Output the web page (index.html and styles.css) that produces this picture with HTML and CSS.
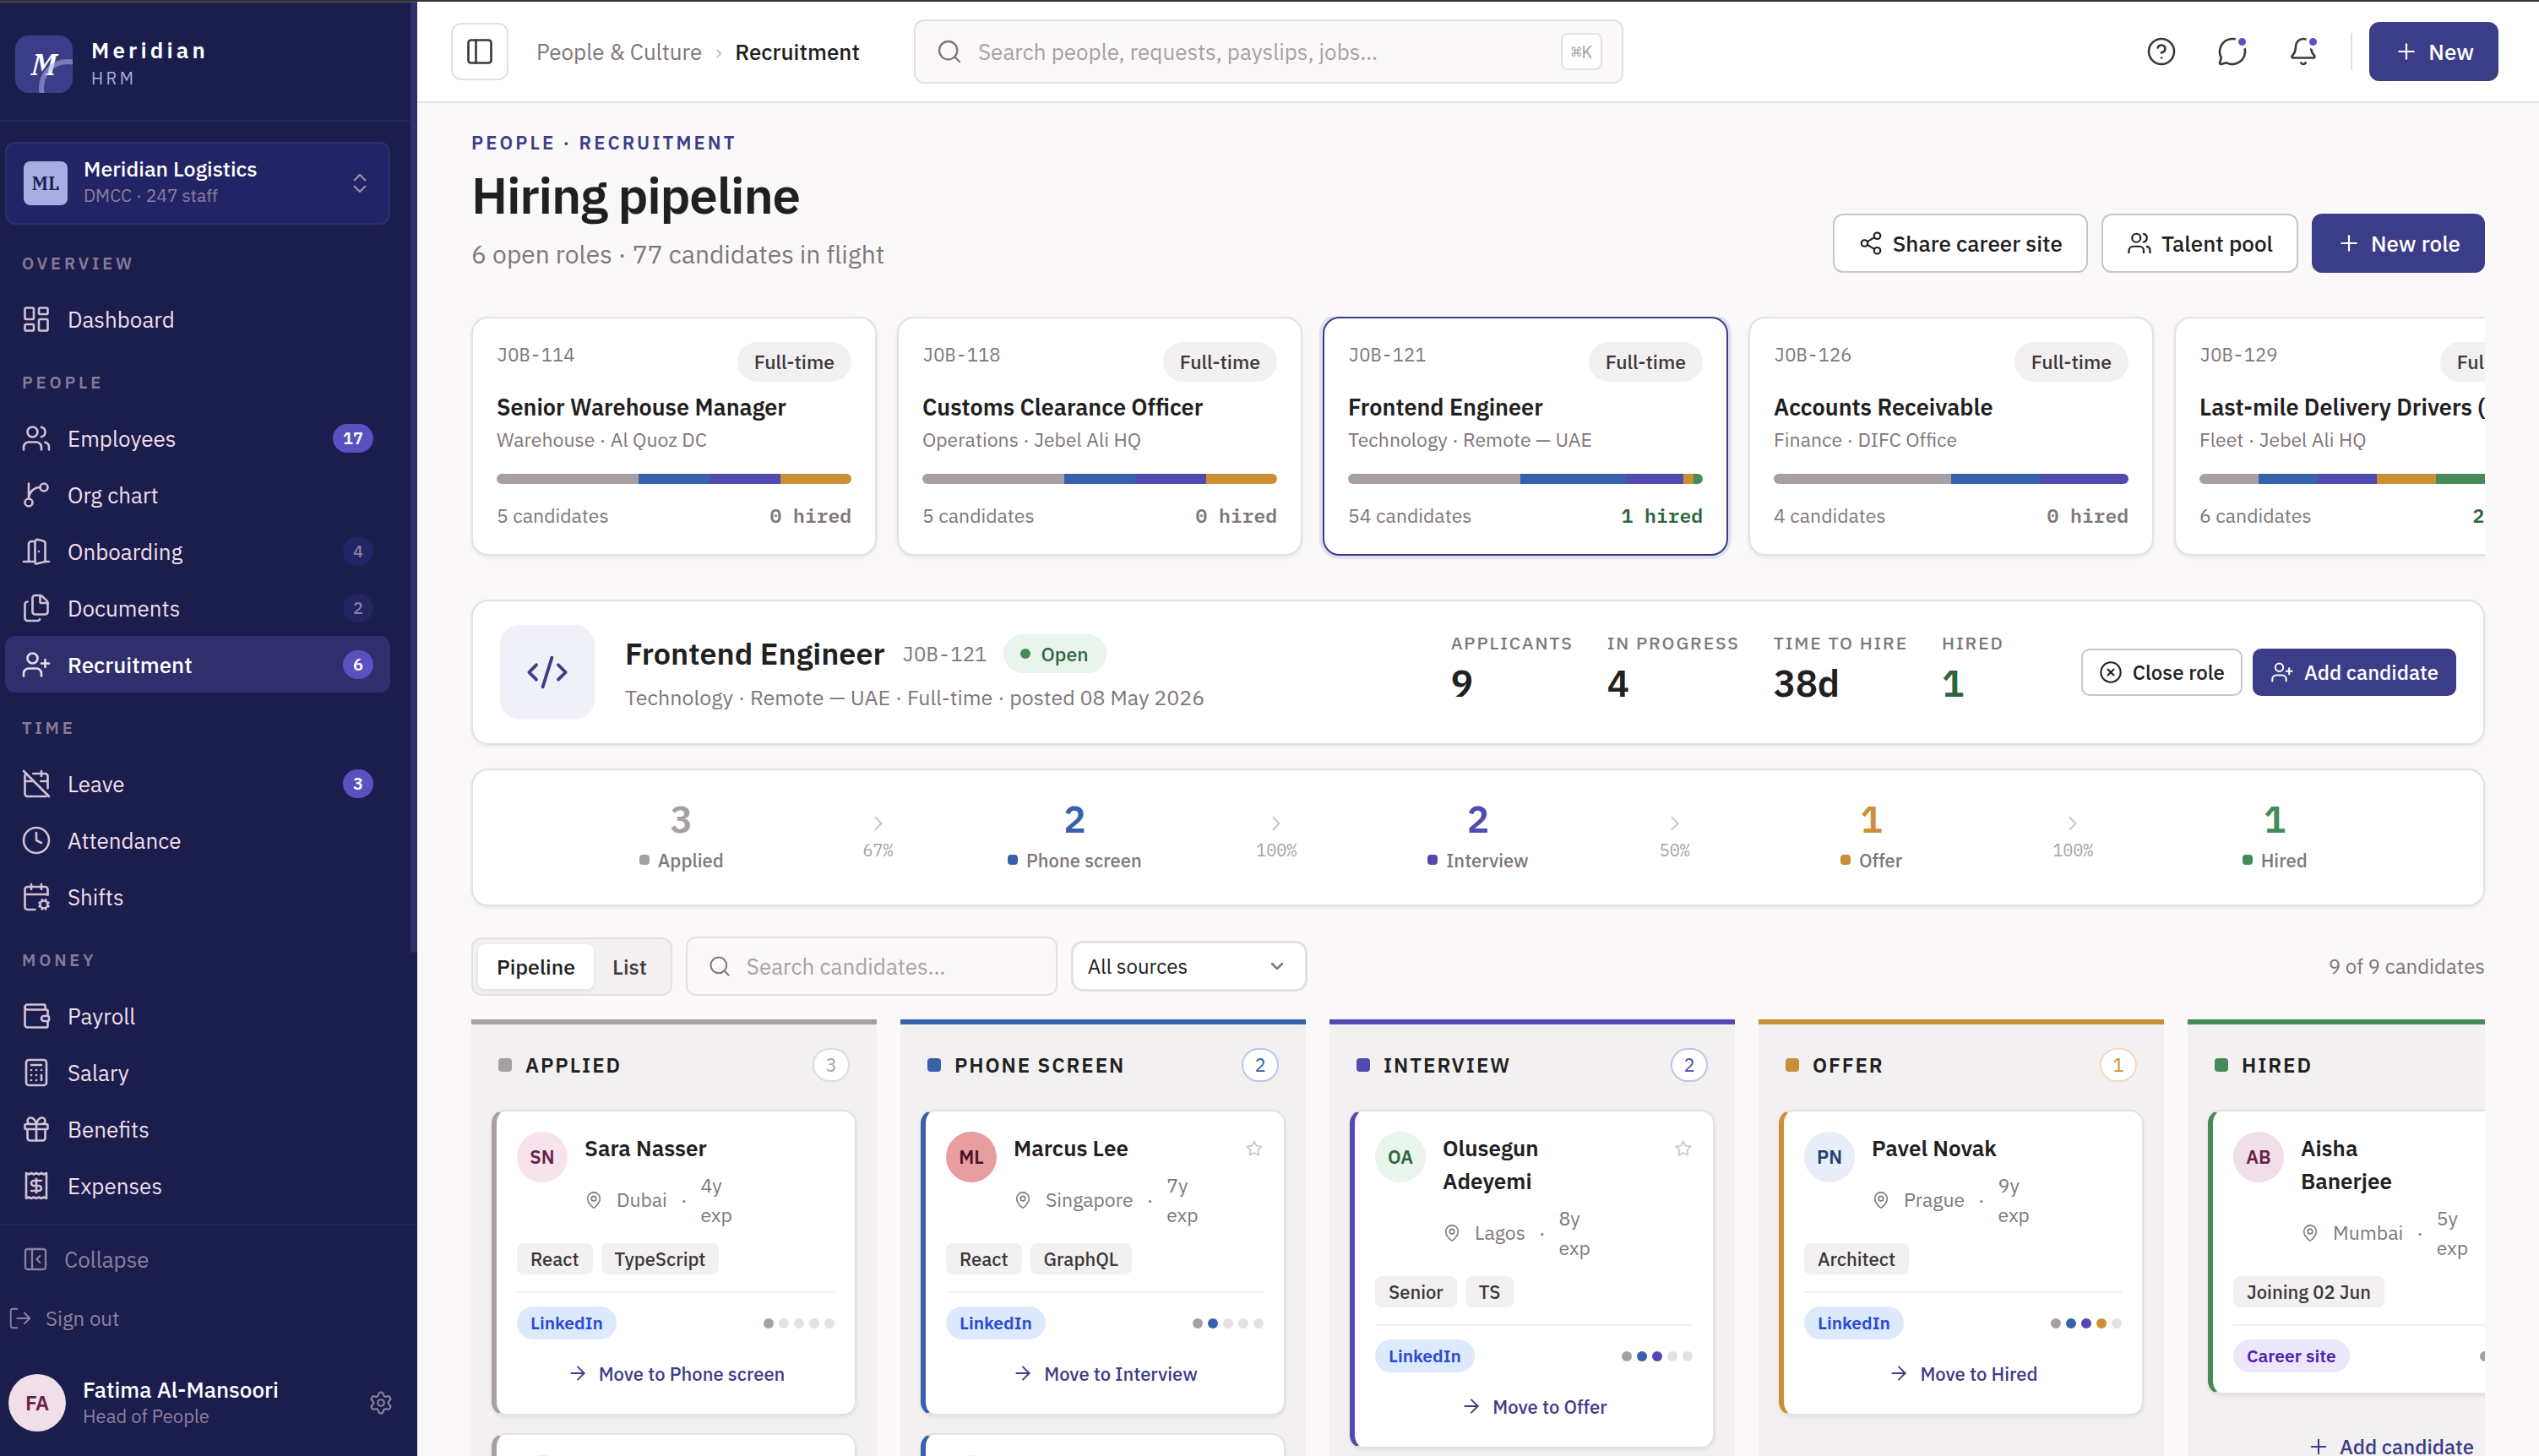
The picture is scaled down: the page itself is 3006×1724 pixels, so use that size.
FILE: index.html
```
<!DOCTYPE html>
<html lang="en">
<head>
    <meta charset="UTF-8">
    <meta name="viewport" content="width=device-width, initial-scale=1.0">
    <title>Meridian HRM - Recruitment</title>
    <link rel="stylesheet" href="styles.css">
</head>
<body>
    <!-- Icon sprite -->
    <svg class="sprite" aria-hidden="true">
        <symbol id="i-dashboard" viewBox="0 0 24 24"><rect x="3" y="3" width="7" height="9" rx="1"/><rect x="14" y="3" width="7" height="5" rx="1"/><rect x="14" y="12" width="7" height="9" rx="1"/><rect x="3" y="16" width="7" height="5" rx="1"/></symbol>
        <symbol id="i-users" viewBox="0 0 24 24"><path d="M16 21v-2a4 4 0 0 0-4-4H6a4 4 0 0 0-4 4v2"/><path d="M16 3.128a4 4 0 0 1 0 7.744"/><path d="M22 21v-2a4 4 0 0 0-3-3.87"/><circle cx="9" cy="7" r="4"/></symbol>
        <symbol id="i-branch" viewBox="0 0 24 24"><path d="M15 6a9 9 0 0 0-9 9V3"/><circle cx="18" cy="6" r="3"/><circle cx="6" cy="18" r="3"/></symbol>
        <symbol id="i-door" viewBox="0 0 24 24"><path d="M11 20H2"/><path d="M11 4.562v16.157a1 1 0 0 0 1.242.97L19 20V5.562a2 2 0 0 0-1.515-1.94l-4-1A2 2 0 0 0 11 4.561z"/><path d="M11 4H8a2 2 0 0 0-2 2v14"/><path d="M14 12h.01"/><path d="M22 20h-3"/></symbol>
        <symbol id="i-files" viewBox="0 0 24 24"><path d="M15 2h-4a2 2 0 0 0-2 2v11a2 2 0 0 0 2 2h8a2 2 0 0 0 2-2V8"/><path d="M16.706 2.706A2.4 2.4 0 0 0 15 2v5a1 1 0 0 0 1 1h5a2.4 2.4 0 0 0-.706-1.706z"/><path d="M5 7a2 2 0 0 0-2 2v11a2 2 0 0 0 2 2h8a2 2 0 0 0 1.732-1"/></symbol>
        <symbol id="i-user-plus" viewBox="0 0 24 24"><path d="M16 21v-2a4 4 0 0 0-4-4H6a4 4 0 0 0-4 4v2"/><circle cx="9" cy="7" r="4"/><path d="M19 8v6"/><path d="M22 11h-6"/></symbol>
        <symbol id="i-cal-off" viewBox="0 0 24 24"><path d="M4.2 4.2A2 2 0 0 0 3 6v14a2 2 0 0 0 2 2h14a2 2 0 0 0 1.82-1.18"/><path d="M21 15.5V6a2 2 0 0 0-2-2H9.5"/><path d="M16 2v4"/><path d="M3 10h7"/><path d="M21 10h-5.5"/><path d="m2 2 20 20"/></symbol>
        <symbol id="i-clock" viewBox="0 0 24 24"><circle cx="12" cy="12" r="10"/><path d="M12 6v6l4 2"/></symbol>
        <symbol id="i-cal-cog" viewBox="0 0 24 24"><path d="m15.2 16.9-.9-.4"/><path d="m15.2 19.1-.9.4"/><path d="M16 2v4"/><path d="m16.9 15.2-.4-.9"/><path d="m16.9 20.8-.4.9"/><path d="m19.5 14.3-.4.9"/><path d="m19.5 21.7-.4-.9"/><path d="M21 10.5V6a2 2 0 0 0-2-2H5a2 2 0 0 0-2 2v14a2 2 0 0 0 2 2h6"/><path d="m21.7 16.5-.9.4"/><path d="m21.7 19.5-.9-.4"/><path d="M3 10h18"/><path d="M8 2v4"/><circle cx="18" cy="18" r="3"/></symbol>
        <symbol id="i-wallet" viewBox="0 0 24 24"><path d="M19 7V4a1 1 0 0 0-1-1H5a2 2 0 0 0 0 4h15a1 1 0 0 1 1 1v4h-3a2 2 0 0 0 0 4h3a1 1 0 0 0 1-1v-2a1 1 0 0 0-1-1"/><path d="M3 5v14a2 2 0 0 0 2 2h15a1 1 0 0 0 1-1v-4"/></symbol>
        <symbol id="i-calc" viewBox="0 0 24 24"><rect x="4" y="2" width="16" height="20" rx="2"/><path d="M8 6h8"/><path d="M16 14v4"/><path d="M16 10h.01"/><path d="M12 10h.01"/><path d="M8 10h.01"/><path d="M12 14h.01"/><path d="M8 14h.01"/><path d="M12 18h.01"/><path d="M8 18h.01"/></symbol>
        <symbol id="i-gift" viewBox="0 0 24 24"><rect x="3" y="8" width="18" height="4" rx="1"/><path d="M12 8v13"/><path d="M19 12v7a2 2 0 0 1-2 2H7a2 2 0 0 1-2-2v-7"/><path d="M7.5 8a2.5 2.5 0 0 1 0-5A4.8 8 0 0 1 12 8a4.8 8 0 0 1 4.5-5 2.5 2.5 0 0 1 0 5"/></symbol>
        <symbol id="i-receipt" viewBox="0 0 24 24"><path d="M4 2v20l2-1 2 1 2-1 2 1 2-1 2 1 2-1 2 1V2l-2 1-2-1-2 1-2-1-2 1-2-1-2 1Z"/><path d="M16 8h-6a2 2 0 1 0 0 4h4a2 2 0 1 1 0 4H8"/><path d="M12 17.5v-11"/></symbol>
        <symbol id="i-panel-close" viewBox="0 0 24 24"><rect x="3" y="3" width="18" height="18" rx="2"/><path d="M9 3v18"/><path d="m16 15-3-3 3-3"/></symbol>
        <symbol id="i-panel" viewBox="0 0 24 24"><rect x="3" y="3" width="18" height="18" rx="2"/><path d="M9 3v18"/></symbol>
        <symbol id="i-logout" viewBox="0 0 24 24"><path d="m16 17 5-5-5-5"/><path d="M21 12H9"/><path d="M9 21H5a2 2 0 0 1-2-2V5a2 2 0 0 1 2-2h4"/></symbol>
        <symbol id="i-settings" viewBox="0 0 24 24"><path d="M9.671 4.136a2.34 2.34 0 0 1 4.659 0 2.34 2.34 0 0 0 3.319 1.915 2.34 2.34 0 0 1 2.33 4.033 2.34 2.34 0 0 0 0 3.831 2.34 2.34 0 0 1-2.33 4.033 2.34 2.34 0 0 0-3.319 1.915 2.34 2.34 0 0 1-4.659 0 2.34 2.34 0 0 0-3.32-1.915 2.34 2.34 0 0 1-2.33-4.033 2.34 2.34 0 0 0 0-3.831A2.34 2.34 0 0 1 6.35 6.051a2.34 2.34 0 0 0 3.319-1.915"/><circle cx="12" cy="12" r="3"/></symbol>
        <symbol id="i-updown" viewBox="0 0 24 24"><path d="m7 15 5 5 5-5"/><path d="m7 9 5-5 5 5"/></symbol>
        <symbol id="i-search" viewBox="0 0 24 24"><circle cx="11" cy="11" r="8"/><path d="m21 21-4.34-4.34"/></symbol>
        <symbol id="i-help" viewBox="0 0 24 24"><circle cx="12" cy="12" r="10"/><path d="M9.09 9a3 3 0 0 1 5.83 1c0 2-3 3-3 3"/><path d="M12 17h.01"/></symbol>
        <symbol id="i-chat" viewBox="0 0 24 24"><path d="M2.992 16.342a2 2 0 0 1 .094 1.167l-1.065 3.29a1 1 0 0 0 1.236 1.168l3.413-.998a2 2 0 0 1 1.099.092 10 10 0 1 0-4.777-4.719"/></symbol>
        <symbol id="i-bell" viewBox="0 0 24 24"><path d="M10.268 21a2 2 0 0 0 3.464 0"/><path d="M3.262 15.326A1 1 0 0 0 4 17h16a1 1 0 0 0 .74-1.673C19.41 13.956 18 12.499 18 8A6 6 0 0 0 6 8c0 4.499-1.411 5.956-2.738 7.326"/></symbol>
        <symbol id="i-plus" viewBox="0 0 24 24"><path d="M5 12h14"/><path d="M12 5v14"/></symbol>
        <symbol id="i-share" viewBox="0 0 24 24"><circle cx="18" cy="5" r="3"/><circle cx="6" cy="12" r="3"/><circle cx="18" cy="19" r="3"/><path d="m8.59 13.51 6.83 3.98"/><path d="m15.41 6.51-6.82 3.98"/></symbol>
        <symbol id="i-code" viewBox="0 0 24 24"><path d="m18 16 4-4-4-4"/><path d="m6 8-4 4 4 4"/><path d="m14.5 4-5 16"/></symbol>
        <symbol id="i-x-circle" viewBox="0 0 24 24"><circle cx="12" cy="12" r="10"/><path d="m15 9-6 6"/><path d="m9 9 6 6"/></symbol>
        <symbol id="i-right" viewBox="0 0 24 24"><path d="m9 18 6-6-6-6"/></symbol>
        <symbol id="i-down" viewBox="0 0 24 24"><path d="m6 9 6 6 6-6"/></symbol>
        <symbol id="i-pin" viewBox="0 0 24 24"><path d="M20 10c0 4.993-5.539 10.193-7.399 11.799a1 1 0 0 1-1.202 0C9.539 20.193 4 14.993 4 10a8 8 0 0 1 16 0"/><circle cx="12" cy="10" r="3"/></symbol>
        <symbol id="i-star" viewBox="0 0 24 24"><path d="M12 2.5l2.95 5.98 6.55.96-4.75 4.62 1.12 6.54L12 17.5l-5.87 3.1 1.12-6.54L2.5 9.44l6.55-.96z"/></symbol>
        <symbol id="i-arrow" viewBox="0 0 24 24"><path d="M5 12h14"/><path d="m12 5 7 7-7 7"/></symbol>
    </svg>

    <div class="app">
        <aside class="sidebar">
            <div class="nav-scroll">
                <div class="brand">
                    <div class="brand-logo">M</div>
                    <div>
                        <div class="brand-name">Meridian</div>
                        <div class="brand-sub">HRM</div>
                    </div>
                </div>

                <div class="workspace">
                    <div class="workspace-logo">ML</div>
                    <div class="workspace-text">
                        <div class="workspace-name">Meridian Logistics</div>
                        <div class="workspace-sub">DMCC · 247 staff</div>
                    </div>
                    <svg class="icon s30"><use href="#i-updown"/></svg>
                </div>

                <nav class="nav">
                    <div class="nav-label">OVERVIEW</div>
                    <a class="nav-item"><svg class="icon s36"><use href="#i-dashboard"/></svg><span>Dashboard</span></a>

                    <div class="nav-label">PEOPLE</div>
                    <a class="nav-item"><svg class="icon s36"><use href="#i-users"/></svg><span>Employees</span><b class="count hot">17</b></a>
                    <a class="nav-item"><svg class="icon s36"><use href="#i-branch"/></svg><span>Org chart</span></a>
                    <a class="nav-item"><svg class="icon s36"><use href="#i-door"/></svg><span>Onboarding</span><b class="count">4</b></a>
                    <a class="nav-item"><svg class="icon s36"><use href="#i-files"/></svg><span>Documents</span><b class="count">2</b></a>
                    <a class="nav-item active"><svg class="icon s36"><use href="#i-user-plus"/></svg><span>Recruitment</span><b class="count hot">6</b></a>

                    <div class="nav-label">TIME</div>
                    <a class="nav-item"><svg class="icon s36"><use href="#i-cal-off"/></svg><span>Leave</span><b class="count hot">3</b></a>
                    <a class="nav-item"><svg class="icon s36"><use href="#i-clock"/></svg><span>Attendance</span></a>
                    <a class="nav-item"><svg class="icon s36"><use href="#i-cal-cog"/></svg><span>Shifts</span></a>

                    <div class="nav-label">MONEY</div>
                    <a class="nav-item"><svg class="icon s36"><use href="#i-wallet"/></svg><span>Payroll</span></a>
                    <a class="nav-item"><svg class="icon s36"><use href="#i-calc"/></svg><span>Salary</span></a>
                    <a class="nav-item"><svg class="icon s36"><use href="#i-gift"/></svg><span>Benefits</span></a>
                    <a class="nav-item"><svg class="icon s36"><use href="#i-receipt"/></svg><span>Expenses</span></a>
                </nav>
                <div class="scroll-thumb"></div>
            </div>

            <div class="side-foot">
                <a class="foot-link collapse"><svg class="icon s32"><use href="#i-panel-close"/></svg><span>Collapse</span></a>
                <a class="foot-link signout"><svg class="icon s30"><use href="#i-logout"/></svg><span>Sign out</span></a>
                <div class="user">
                    <div class="user-avatar">FA</div>
                    <div class="user-text">
                        <div class="user-name">Fatima Al-Mansoori</div>
                        <div class="user-role">Head of People</div>
                    </div>
                    <svg class="icon s30"><use href="#i-settings"/></svg>
                </div>
            </div>
        </aside>

        <div class="main">
            <header class="topbar">
                <button class="panel-btn"><svg class="icon s36"><use href="#i-panel"/></svg></button>
                <div class="crumbs"><span>People &amp; Culture</span><i>›</i><strong>Recruitment</strong></div>
                <div class="search">
                    <svg class="icon s32"><use href="#i-search"/></svg>
                    <span>Search people, requests, payslips, jobs…</span>
                    <kbd>⌘K</kbd>
                </div>
                <div class="top-actions">
                    <button class="icon-btn"><svg class="icon s36"><use href="#i-help"/></svg></button>
                    <button class="icon-btn"><svg class="icon s36"><use href="#i-chat"/></svg><em class="ping"></em></button>
                    <button class="icon-btn"><svg class="icon s36"><use href="#i-bell"/></svg><em class="ping"></em></button>
                    <div class="divider"></div>
                    <button class="btn primary new-btn"><svg class="icon s30"><use href="#i-plus"/></svg>New</button>
                </div>
            </header>

            <main class="page">
                <div class="page-head">
                    <div>
                        <div class="eyebrow">PEOPLE · RECRUITMENT</div>
                        <h1>Hiring pipeline</h1>
                        <p class="page-sub">6 open roles · 77 candidates in flight</p>
                    </div>
                    <div class="head-actions">
                        <button class="btn"><svg class="icon s30"><use href="#i-share"/></svg>Share career site</button>
                        <button class="btn"><svg class="icon s30"><use href="#i-users"/></svg>Talent pool</button>
                        <button class="btn primary"><svg class="icon s30"><use href="#i-plus"/></svg>New role</button>
                    </div>
                </div>

                <!-- Open roles -->
                <div class="jobs">
                    <div class="job">
                        <div class="job-top"><code>JOB-114</code><span class="pill">Full-time</span></div>
                        <h3>Senior Warehouse Manager</h3>
                        <p>Warehouse · Al Quoz DC</p>
                        <div class="bar"><i class="applied" style="width:40%"></i><i class="phone" style="width:20%"></i><i class="interview" style="width:20%"></i><i class="offer" style="width:20%"></i></div>
                        <div class="job-foot"><span>5 candidates</span><b>0 hired</b></div>
                    </div>
                    <div class="job">
                        <div class="job-top"><code>JOB-118</code><span class="pill">Full-time</span></div>
                        <h3>Customs Clearance Officer</h3>
                        <p>Operations · Jebel Ali HQ</p>
                        <div class="bar"><i class="applied" style="width:40%"></i><i class="phone" style="width:20%"></i><i class="interview" style="width:20%"></i><i class="offer" style="width:20%"></i></div>
                        <div class="job-foot"><span>5 candidates</span><b>0 hired</b></div>
                    </div>
                    <div class="job selected">
                        <div class="job-top"><code>JOB-121</code><span class="pill">Full-time</span></div>
                        <h3>Frontend Engineer</h3>
                        <p>Technology · Remote — UAE</p>
                        <div class="bar"><i class="applied" style="width:48.6%"></i><i class="phone" style="width:29.8%"></i><i class="interview" style="width:16.1%"></i><i class="offer" style="width:2.8%"></i><i class="hired" style="width:2.7%"></i></div>
                        <div class="job-foot"><span>54 candidates</span><b class="green">1 hired</b></div>
                    </div>
                    <div class="job">
                        <div class="job-top"><code>JOB-126</code><span class="pill">Full-time</span></div>
                        <h3>Accounts Receivable</h3>
                        <p>Finance · DIFC Office</p>
                        <div class="bar"><i class="applied" style="width:50%"></i><i class="phone" style="width:25%"></i><i class="interview" style="width:25%"></i></div>
                        <div class="job-foot"><span>4 candidates</span><b>0 hired</b></div>
                    </div>
                    <div class="job">
                        <div class="job-top"><code>JOB-129</code><span class="pill">Full-time</span></div>
                        <h3>Last-mile Delivery Drivers (x4)</h3>
                        <p>Fleet · Jebel Ali HQ</p>
                        <div class="bar"><i class="applied" style="width:16.67%"></i><i class="phone" style="width:16.67%"></i><i class="interview" style="width:16.67%"></i><i class="offer" style="width:16.67%"></i><i class="hired" style="width:33.32%"></i></div>
                        <div class="job-foot"><span>6 candidates</span><b class="green">2 hired</b></div>
                    </div>
                </div>

                <!-- Selected role -->
                <section class="role">
                    <div class="role-icon"><svg class="icon s52"><use href="#i-code"/></svg></div>
                    <div class="role-info">
                        <div class="role-title"><h2>Frontend Engineer</h2><code>JOB-121</code><span class="status"><i></i>Open</span></div>
                        <p>Technology · Remote — UAE · Full-time · posted 08 May 2026</p>
                    </div>
                    <div class="stats">
                        <div><span>APPLICANTS</span><b>9</b></div>
                        <div><span>IN PROGRESS</span><b>4</b></div>
                        <div><span>TIME TO HIRE</span><b>38d</b></div>
                        <div><span>HIRED</span><b class="green">1</b></div>
                    </div>
                    <div class="role-actions">
                        <button class="btn small"><svg class="icon s28"><use href="#i-x-circle"/></svg>Close role</button>
                        <button class="btn small primary"><svg class="icon s28"><use href="#i-user-plus"/></svg>Add candidate</button>
                    </div>
                </section>

                <section class="funnel">
                    <div class="stage c-applied"><b>3</b><span><i></i>Applied</span></div>
                    <div class="step"><svg class="icon s28"><use href="#i-right"/></svg><code>67%</code></div>
                    <div class="stage c-phone"><b>2</b><span><i></i>Phone screen</span></div>
                    <div class="step"><svg class="icon s28"><use href="#i-right"/></svg><code>100%</code></div>
                    <div class="stage c-interview"><b>2</b><span><i></i>Interview</span></div>
                    <div class="step"><svg class="icon s28"><use href="#i-right"/></svg><code>50%</code></div>
                    <div class="stage c-offer"><b>1</b><span><i></i>Offer</span></div>
                    <div class="step"><svg class="icon s28"><use href="#i-right"/></svg><code>100%</code></div>
                    <div class="stage c-hired"><b>1</b><span><i></i>Hired</span></div>
                </section>

                <div class="toolbar">
                    <div class="segmented"><span class="on">Pipeline</span><span>List</span></div>
                    <div class="find"><svg class="icon s28"><use href="#i-search"/></svg>Search candidates…</div>
                    <div class="select">All sources<svg class="icon s24"><use href="#i-down"/></svg></div>
                    <div class="total">9 of 9 candidates</div>
                </div>

                <!-- Kanban board -->
                <div class="board">
                    <div class="col c-applied">
                        <div class="col-head"><i></i><h4>APPLIED</h4><span>3</span></div>
                        <article class="card">
                            <div class="person">
                                <div class="avatar pink">SN</div>
                                <div>
                                    <div class="name">Sara Nasser</div>
                                    <div class="meta"><svg class="icon s22"><use href="#i-pin"/></svg><span>Dubai</span><span>·</span><span>4y<br>exp</span></div>
                                </div>
                            </div>
                            <div class="tags"><span>React</span><span>TypeScript</span></div>
                            <div class="card-foot"><span class="source">LinkedIn</span><div class="dots"><i class="applied"></i><i></i><i></i><i></i><i></i></div></div>
                            <div class="move"><svg class="icon s26"><use href="#i-arrow"/></svg>Move to Phone screen</div>
                        </article>
                        <article class="card">
                            <div class="person"><div class="avatar pink"></div></div>
                        </article>
                    </div>

                    <div class="col c-phone">
                        <div class="col-head"><i></i><h4>PHONE SCREEN</h4><span>2</span></div>
                        <article class="card">
                            <div class="person">
                                <div class="avatar red">ML</div>
                                <div>
                                    <div class="name">Marcus Lee</div>
                                    <div class="meta"><svg class="icon s22"><use href="#i-pin"/></svg><span>Singapore</span><span>·</span><span>7y<br>exp</span></div>
                                </div>
                                <svg class="icon s22 star"><use href="#i-star"/></svg>
                            </div>
                            <div class="tags"><span>React</span><span>GraphQL</span></div>
                            <div class="card-foot"><span class="source">LinkedIn</span><div class="dots"><i class="applied"></i><i class="phone"></i><i></i><i></i><i></i></div></div>
                            <div class="move"><svg class="icon s26"><use href="#i-arrow"/></svg>Move to Interview</div>
                        </article>
                        <article class="card">
                            <div class="person"><div class="avatar sand"></div></div>
                        </article>
                    </div>

                    <div class="col c-interview">
                        <div class="col-head"><i></i><h4>INTERVIEW</h4><span>2</span></div>
                        <article class="card">
                            <div class="person">
                                <div class="avatar mint">OA</div>
                                <div>
                                    <div class="name">Olusegun<br>Adeyemi</div>
                                    <div class="meta"><svg class="icon s22"><use href="#i-pin"/></svg><span>Lagos</span><span>·</span><span>8y<br>exp</span></div>
                                </div>
                                <svg class="icon s22 star"><use href="#i-star"/></svg>
                            </div>
                            <div class="tags"><span>Senior</span><span>TS</span></div>
                            <div class="card-foot"><span class="source">LinkedIn</span><div class="dots"><i class="applied"></i><i class="phone"></i><i class="interview"></i><i></i><i></i></div></div>
                            <div class="move"><svg class="icon s26"><use href="#i-arrow"/></svg>Move to Offer</div>
                        </article>
                    </div>

                    <div class="col c-offer">
                        <div class="col-head"><i></i><h4>OFFER</h4><span>1</span></div>
                        <article class="card">
                            <div class="person">
                                <div class="avatar blue">PN</div>
                                <div>
                                    <div class="name">Pavel Novak</div>
                                    <div class="meta"><svg class="icon s22"><use href="#i-pin"/></svg><span>Prague</span><span>·</span><span>9y<br>exp</span></div>
                                </div>
                            </div>
                            <div class="tags"><span>Architect</span></div>
                            <div class="card-foot"><span class="source">LinkedIn</span><div class="dots"><i class="applied"></i><i class="phone"></i><i class="interview"></i><i class="offer"></i><i></i></div></div>
                            <div class="move"><svg class="icon s26"><use href="#i-arrow"/></svg>Move to Hired</div>
                        </article>
                    </div>

                    <div class="col c-hired">
                        <div class="col-head"><i></i><h4>HIRED</h4><span>1</span></div>
                        <article class="card">
                            <div class="person">
                                <div class="avatar rose">AB</div>
                                <div>
                                    <div class="name">Aisha<br>Banerjee</div>
                                    <div class="meta"><svg class="icon s22"><use href="#i-pin"/></svg><span>Mumbai</span><span>·</span><span>5y<br>exp</span></div>
                                </div>
                            </div>
                            <div class="tags"><span>Joining 02 Jun</span></div>
                            <div class="card-foot"><span class="source career">Career site</span><div class="dots"><i class="applied"></i><i class="phone"></i><i class="interview"></i><i class="offer"></i><i class="hired"></i></div></div>
                        </article>
                        <div class="add"><svg class="icon s28"><use href="#i-plus"/></svg>Add candidate</div>
                    </div>
                </div>
            </main>
        </div>
    </div>
</body>
</html>
```
FILE: styles.css
```
:root {
    --navy: #1b1d4d;
    --navy-2: #232465;
    --navy-3: #302e6c;
    --indigo: #3c3d88;
    --violet: #5a50bf;
    --ink: #212020;
    --ink-2: #3d3839;
    --muted: #80767a;
    --faint: #a89fa4;
    --line: #e4e0e3;
    --soft: #f2f0f1;
    --bg: #faf8f9;
    --applied: #a89fa4;
    --phone: #3762ab;
    --interview: #534ab1;
    --offer: #cb8f37;
    --hired: #448b58;
    --sans: "IBM Plex Sans", "Open Sans", "Noto Sans", sans-serif;
    --mono: "IBM Plex Mono", "Liberation Mono", monospace;
    --serif: "IBM Plex Serif", "Noto Serif", "Liberation Serif", serif;
}

* {
    margin: 0;
    padding: 0;
    box-sizing: border-box;
}

body {
    font-family: var(--sans);
    font-size: 26px;
    color: var(--ink);
    background: var(--bg);
    overflow: hidden;
}

button {
    font: inherit;
    color: inherit;
    background: none;
    border: none;
}

code {
    font-family: var(--mono);
}

/* Icons */
.sprite {
    position: absolute;
    width: 0;
    height: 0;
}

.icon {
    flex: none;
    fill: none;
    stroke: currentColor;
    stroke-width: 1.75;
    stroke-linecap: round;
    stroke-linejoin: round;
}

.s22 { width: 22px; height: 22px; }
.s24 { width: 24px; height: 24px; }
.s26 { width: 26px; height: 26px; }
.s28 { width: 28px; height: 28px; }
.s30 { width: 30px; height: 30px; }
.s32 { width: 32px; height: 32px; }
.s36 { width: 36px; height: 36px; }
.s52 { width: 52px; height: 52px; }

/* Stage colours */
.c-applied { --c: var(--applied); --ring: #e0dcde; }
.c-phone { --c: var(--phone); --ring: #b9cae6; }
.c-interview { --c: var(--interview); --ring: #c6c1e8; }
.c-offer { --c: var(--offer); --ring: #f0dcbc; }
.c-hired { --c: var(--hired); --ring: #bcdcc5; }

.applied { background: var(--applied); }
.phone { background: var(--phone); }
.interview { background: var(--interview); }
.offer { background: var(--offer); }
.hired { background: var(--hired); }

.green {
    color: #2c653d !important;
}

.app {
    display: flex;
    height: 1724px;
    border-top: 2px solid #333032;
}

/* Sidebar */
.sidebar {
    width: 494px;
    flex: none;
    display: flex;
    flex-direction: column;
    background: var(--navy);
    color: #fff;
    border-top: 1px solid #55547a;
}

.nav-scroll {
    position: relative;
    height: 1446px;
    padding-right: 8px;
    overflow: hidden;
}

.scroll-thumb {
    position: absolute;
    top: 0;
    right: 0;
    width: 8px;
    height: 1125px;
    border-radius: 4px;
    background: var(--navy-3);
}

.brand {
    display: flex;
    gap: 22px;
    height: 141px;
    padding: 39px 18px 0;
    border-bottom: 2px solid var(--navy-2);
}

.brand-logo {
    position: relative;
    width: 68px;
    height: 68px;
    border-radius: 16px;
    overflow: hidden;
    background: var(--indigo);
    font: italic 600 36px/68px var(--serif);
    text-align: center;
}

.brand-logo::after {
    content: "";
    position: absolute;
    left: 28px;
    top: 28px;
    width: 56px;
    height: 56px;
    border: 6px solid #a9aee2;
    border-radius: 50%;
    opacity: 0.55;
}

.brand-name {
    font-weight: 600;
    line-height: 34px;
    letter-spacing: 0.16em;
}

.brand-sub {
    margin-top: 2px;
    font-size: 20px;
    line-height: 30px;
    letter-spacing: 0.17em;
    color: #a9aee2;
}

.workspace {
    display: flex;
    align-items: center;
    width: 456px;
    height: 98px;
    margin: 24px 0 0 6px;
    padding: 0 19px 0 20px;
    border: 2px solid var(--navy-3);
    border-radius: 12px;
    background: var(--navy-2);
}

.workspace-logo {
    width: 52px;
    height: 52px;
    margin-right: 19px;
    border-radius: 8px;
    background: #a9aee2;
    color: var(--navy);
    font: 600 22px/52px var(--serif);
    text-align: center;
}

.workspace-text {
    flex: 1;
    padding-bottom: 5px;
}

.workspace-name {
    font-size: 25px;
    font-weight: 500;
    line-height: 34px;
}

.workspace-sub {
    font-size: 21px;
    line-height: 29px;
    color: #8b80a0;
}

.workspace .icon {
    color: #9c92ad;
}

.nav {
    width: 456px;
    margin: 4px 0 0 6px;
}

.nav-label {
    height: 74px;
    padding: 27px 0 0 20px;
    font-size: 20px;
    font-weight: 600;
    line-height: 30px;
    letter-spacing: 0.19em;
    color: #857a99;
}

.nav-item {
    display: flex;
    align-items: center;
    gap: 19px;
    height: 67px;
    padding: 0 20px 0 19px;
    border-radius: 12px;
    color: #f0dfea;
}

.nav-item .icon {
    opacity: 0.85;
}

.nav-item.active {
    background: var(--navy-3);
    color: #fff;
    font-weight: 500;
}

.count {
    min-width: 36px;
    height: 34px;
    margin-left: auto;
    padding: 0 12px;
    border-radius: 17px;
    background: var(--navy-2);
    color: #8b80a0;
    font-size: 20px;
    font-weight: 500;
    line-height: 34px;
    text-align: center;
}

.count.hot {
    background: var(--violet);
    color: #fff;
    font-weight: 600;
}

.side-foot {
    flex: 1;
    border-top: 2px solid var(--navy-2);
    color: #8b80a0;
}

.foot-link {
    display: flex;
    align-items: center;
}

.collapse {
    gap: 18px;
    height: 67px;
    margin: 6px 0 0 26px;
}

.signout {
    gap: 15px;
    height: 60px;
    margin: 7px 0 0 9px;
    font-size: 24px;
}

.signout .icon {
    stroke-width: 1.5;
}

.user {
    display: flex;
    align-items: center;
    margin-top: 36px;
    padding: 0 28px 0 10px;
}

.user-avatar {
    width: 68px;
    height: 68px;
    margin-right: 20px;
    border-radius: 50%;
    background: #f0dfe8;
    color: #6a1f47;
    font-size: 24px;
    font-weight: 600;
    line-height: 68px;
    text-align: center;
}

.user-text {
    flex: 1;
    padding-bottom: 4px;
}

.user-name {
    font-weight: 500;
    line-height: 34px;
    color: #fff;
}

.user-role {
    font-size: 22px;
    line-height: 29px;
}

/* Top bar */
.main {
    flex: 1;
    min-width: 0;
    display: flex;
    flex-direction: column;
}

.topbar {
    display: flex;
    align-items: center;
    height: 120px;
    flex: none;
    padding: 0 48px 0 40px;
    background: #fff;
    border-bottom: 2px solid var(--line);
}

.panel-btn {
    width: 68px;
    height: 68px;
    display: grid;
    place-items: center;
    border: 2px solid var(--line);
    border-radius: 12px;
    color: var(--ink-2);
}

.crumbs {
    display: flex;
    width: 447px;
    margin-left: 33px;
    color: var(--muted);
}

.crumbs i {
    width: 39px;
    color: #c9c3c6;
    font-style: normal;
    text-align: center;
}

.crumbs strong {
    color: var(--ink);
    font-weight: 500;
}

.search {
    display: flex;
    align-items: center;
    width: 840px;
    height: 76px;
    padding: 0 23px 0 24px;
    border: 2px solid var(--line);
    border-radius: 12px;
    background: var(--bg);
    color: var(--faint);
}

.search .icon {
    margin-right: 18px;
    color: var(--muted);
}

.search kbd {
    width: 49px;
    height: 44px;
    margin-left: auto;
    border: 2px solid var(--line);
    border-radius: 8px;
    background: #fff;
    font: 21px/40px var(--mono);
    text-align: center;
}

.top-actions {
    display: flex;
    align-items: center;
    gap: 16px;
    margin-left: auto;
}

.icon-btn {
    position: relative;
    width: 68px;
    height: 68px;
    display: grid;
    place-items: center;
    color: var(--ink-2);
}

.ping {
    position: absolute;
    top: 14px;
    right: 14px;
    width: 17px;
    height: 17px;
    border: 4px solid #fff;
    border-radius: 50%;
    background: var(--violet);
}

.divider {
    width: 2px;
    height: 44px;
    margin: 0 4px 0 6px;
    background: var(--line);
}

.btn {
    display: flex;
    align-items: center;
    gap: 11px;
    height: 70px;
    padding: 0 28px;
    border: 2px solid #cbc5c8;
    border-radius: 12px;
    background: #fff;
    font-weight: 500;
}

.btn.primary {
    padding: 0 27px;
    border-color: var(--indigo);
    background: var(--indigo);
    color: #fff;
}

.btn.small {
    gap: 12px;
    height: 56px;
    padding: 0 19px;
    border-radius: 10px;
    font-size: 24px;
}

/* Page */
.page {
    flex: 1;
    min-height: 0;
    padding: 30px 64px 0;
    overflow: hidden;
}

.page-head {
    display: flex;
    align-items: flex-end;
    justify-content: space-between;
    height: 171px;
}

.eyebrow {
    font-size: 22px;
    font-weight: 600;
    line-height: 33px;
    letter-spacing: 0.14em;
    color: var(--indigo);
}

h1 {
    margin-top: 13px;
    font-size: 60px;
    font-weight: 600;
    line-height: 66px;
    letter-spacing: -0.02em;
}

.page-sub {
    margin-top: 14px;
    font-size: 30px;
    line-height: 45px;
    color: var(--muted);
}

.head-actions,
.role-actions {
    display: flex;
    gap: 16px;
}

.role-actions {
    gap: 12px;
}

/* Job cards */
.jobs {
    display: flex;
    gap: 24px;
    margin: 52px -4px 0;
    padding: 0 4px 12px;
    overflow: hidden;
    clip-path: inset(0 4px 0 0);
}

.job {
    flex: 0 0 480px;
    height: 283px;
    padding: 28px;
    border: 2px solid var(--line);
    border-radius: 20px;
    background: #fff;
    box-shadow: 0 2px 4px rgba(40, 30, 35, 0.08);
}

.job.selected {
    border-color: var(--indigo);
    box-shadow: 0 0 0 4px #dfe0f1;
}

.job-top,
.job-foot {
    display: flex;
    justify-content: space-between;
}

.job-top code {
    font-size: 22px;
    line-height: 30px;
    color: var(--muted);
}

.pill {
    height: 47px;
    padding: 0 20px;
    border-radius: 24px;
    background: var(--soft);
    color: var(--ink-2);
    font-size: 23px;
    font-weight: 500;
    line-height: 47px;
}

.job h3 {
    margin-top: 12px;
    font-size: 27px;
    font-weight: 600;
    line-height: 35px;
    white-space: nowrap;
}

.job p {
    margin-top: 4px;
    font-size: 23px;
    line-height: 34px;
    color: var(--muted);
}

.bar {
    display: flex;
    height: 12px;
    margin-top: 24px;
    border-radius: 6px;
    overflow: hidden;
}

.job-foot {
    margin-top: 20px;
    font-size: 23px;
    line-height: 35px;
    color: var(--muted);
}

.job-foot b {
    font-family: var(--mono);
    font-weight: 600;
}

/* Selected role */
.role,
.funnel {
    display: flex;
    align-items: center;
    border: 2px solid var(--line);
    border-radius: 20px;
    background: #fff;
    box-shadow: 0 2px 4px rgba(40, 30, 35, 0.08);
}

.role {
    height: 172px;
    margin-top: 40px;
    padding: 0 32px;
}

.role-icon {
    width: 112px;
    height: 112px;
    display: grid;
    place-items: center;
    border-radius: 24px;
    background: #f0f0f9;
    color: var(--indigo);
}

.role-info {
    margin-left: 36px;
    padding-top: 4px;
}

.role-title {
    display: flex;
    align-items: center;
    gap: 20px;
}

.role-title h2 {
    font-size: 36px;
    font-weight: 600;
    line-height: 46px;
}

.role-title code {
    font-size: 24px;
    color: var(--muted);
}

.status {
    display: flex;
    align-items: center;
    gap: 12px;
    height: 46px;
    padding: 0 21px 0 20px;
    border-radius: 23px;
    background: #e9f4ed;
    color: #2c653d;
    font-size: 23px;
    font-weight: 500;
}

.status i {
    width: 12px;
    height: 12px;
    border-radius: 50%;
    background: var(--hired);
}

.role-info p {
    margin-top: 9px;
    font-size: 25px;
    line-height: 39px;
    color: var(--muted);
}

.stats {
    display: flex;
    gap: 40px;
    margin: 0 91px 0 auto;
    padding-bottom: 13px;
}

.stats span {
    display: block;
    font-size: 21px;
    font-weight: 500;
    line-height: 30px;
    letter-spacing: 0.09em;
    color: var(--muted);
}

.stats b {
    display: block;
    margin-top: 9px;
    font-size: 44px;
    font-weight: 600;
    line-height: 48px;
    letter-spacing: -0.01em;
}

/* Funnel */
.funnel {
    height: 163px;
    margin-top: 28px;
    padding: 0 32px;
}

.stage {
    flex: 1;
    text-align: center;
}

.stage b {
    display: block;
    font-size: 44px;
    font-weight: 600;
    line-height: 44px;
    color: var(--c);
}

.stage span {
    display: flex;
    align-items: center;
    justify-content: center;
    gap: 10px;
    margin-top: 10px;
    margin-bottom: 1px;
    font-size: 22px;
    font-weight: 500;
    line-height: 33px;
    color: var(--muted);
}

.stage i,
.col-head i {
    width: 12px;
    height: 12px;
    border-radius: 4px;
    background: var(--c);
}

.step {
    display: flex;
    flex-direction: column;
    align-items: center;
    gap: 5px;
    padding-bottom: 2px;
    color: #cbc5c8;
}

.step code {
    font-size: 20px;
    line-height: 26px;
    color: var(--faint);
}

/* Toolbar */
.toolbar {
    display: flex;
    align-items: center;
    height: 70px;
    margin-top: 36px;
}

.segmented {
    display: flex;
    height: 69px;
    padding: 6px;
    border: 2px solid var(--line);
    border-radius: 12px;
    background: var(--soft);
}

.segmented span {
    padding: 0 22px;
    border-radius: 8px;
    color: var(--ink-2);
    font-size: 25px;
    font-weight: 500;
    line-height: 53px;
}

.segmented .on {
    background: #fff;
    color: var(--ink);
    box-shadow: 0 2px 4px rgba(40, 30, 35, 0.08);
}

.find {
    display: flex;
    align-items: center;
    gap: 18px;
    width: 440px;
    height: 70px;
    margin-left: 16px;
    padding-left: 24px;
    border: 2px solid var(--line);
    border-radius: 12px;
    color: var(--faint);
}

.find .icon {
    color: var(--muted);
}

.select {
    display: flex;
    align-items: center;
    justify-content: space-between;
    width: 280px;
    height: 60px;
    margin-left: 16px;
    padding: 0 21px 0 17px;
    border: 3px solid var(--line);
    border-radius: 14px;
    background: #fff;
    font-size: 24px;
}

.select .icon {
    stroke-width: 2.5;
    color: var(--muted);
}

.total {
    margin-left: auto;
    font-size: 24px;
    color: var(--muted);
}

/* Board */
.board {
    display: flex;
    gap: 28px;
    height: 517px;
    margin-top: 28px;
    overflow: hidden;
}

.col {
    flex: 0 0 480px;
    padding: 28px 24px 0;
    border-top: 6px solid var(--c);
    background: var(--soft);
}

.col-head {
    display: flex;
    align-items: center;
    height: 40px;
    margin-bottom: 33px;
    padding: 0 8px;
}

.col-head i {
    width: 16px;
    height: 16px;
    margin-right: 16px;
}

.col-head h4 {
    font-size: 24px;
    font-weight: 600;
    letter-spacing: 0.08em;
}

.col-head span {
    width: 44px;
    height: 40px;
    margin-left: auto;
    border: 2px solid var(--ring);
    border-radius: 22px;
    background: #fff;
    color: var(--c);
    font-size: 22px;
    line-height: 36px;
    text-align: center;
}

.card {
    margin-bottom: 21px;
    padding: 24px;
    border: 2px solid var(--line);
    border-left: 6px solid var(--c);
    border-radius: 16px;
    background: #fff;
    box-shadow: 0 2px 4px rgba(40, 30, 35, 0.08);
}

.person {
    display: flex;
    align-items: flex-start;
}

.avatar {
    width: 60px;
    height: 60px;
    flex: none;
    margin-right: 20px;
    border-radius: 50%;
    font-size: 22px;
    font-weight: 600;
    line-height: 60px;
    text-align: center;
}

.pink { background: #f7e3ec; color: #6a1f47; }
.red { background: #e89d9f; color: #4a1228; }
.mint { background: #e9f4ed; color: #2c653d; }
.blue { background: #e7eef7; color: #20406f; }
.rose { background: #f0dfe8; color: #6a1f47; }
.sand { background: #fbf1e0; color: #7a5417; }

.name {
    font-weight: 600;
    line-height: 39px;
}

.meta {
    display: flex;
    align-items: center;
    gap: 16px;
    margin-top: 7px;
    font-size: 23px;
    line-height: 34.5px;
    color: var(--muted);
}

.star {
    margin: 9px 0 0 auto;
    color: #cbc5c8;
}

.tags {
    display: flex;
    gap: 10px;
    margin-top: 17px;
}

.tags span {
    height: 37px;
    padding: 0 16px;
    border-radius: 8px;
    background: var(--soft);
    color: var(--ink-2);
    font-size: 22px;
    font-weight: 500;
    line-height: 37px;
}

.card-foot {
    display: flex;
    align-items: center;
    justify-content: space-between;
    margin-top: 20px;
    padding-top: 16px;
    border-top: 2px solid var(--soft);
}

.source {
    height: 39px;
    padding: 0 16px;
    border-radius: 20px;
    background: #dde9fc;
    color: #2b4bd3;
    font-size: 21px;
    font-weight: 600;
    line-height: 39px;
}

.source.career {
    background: #ece8fc;
    color: #5522b0;
}

.dots {
    display: flex;
    gap: 6px;
}

.dots i {
    width: 12px;
    height: 12px;
    border-radius: 50%;
}

.dots i:not([class]) {
    background: var(--line);
}

.move,
.add {
    display: flex;
    align-items: center;
    justify-content: center;
    gap: 12px;
    height: 48px;
    margin-top: 16px;
    color: var(--indigo);
    font-size: 22px;
    font-weight: 500;
}

.add {
    gap: 11px;
    height: 60px;
    margin-top: 32px;
    font-size: 24px;
}
```
